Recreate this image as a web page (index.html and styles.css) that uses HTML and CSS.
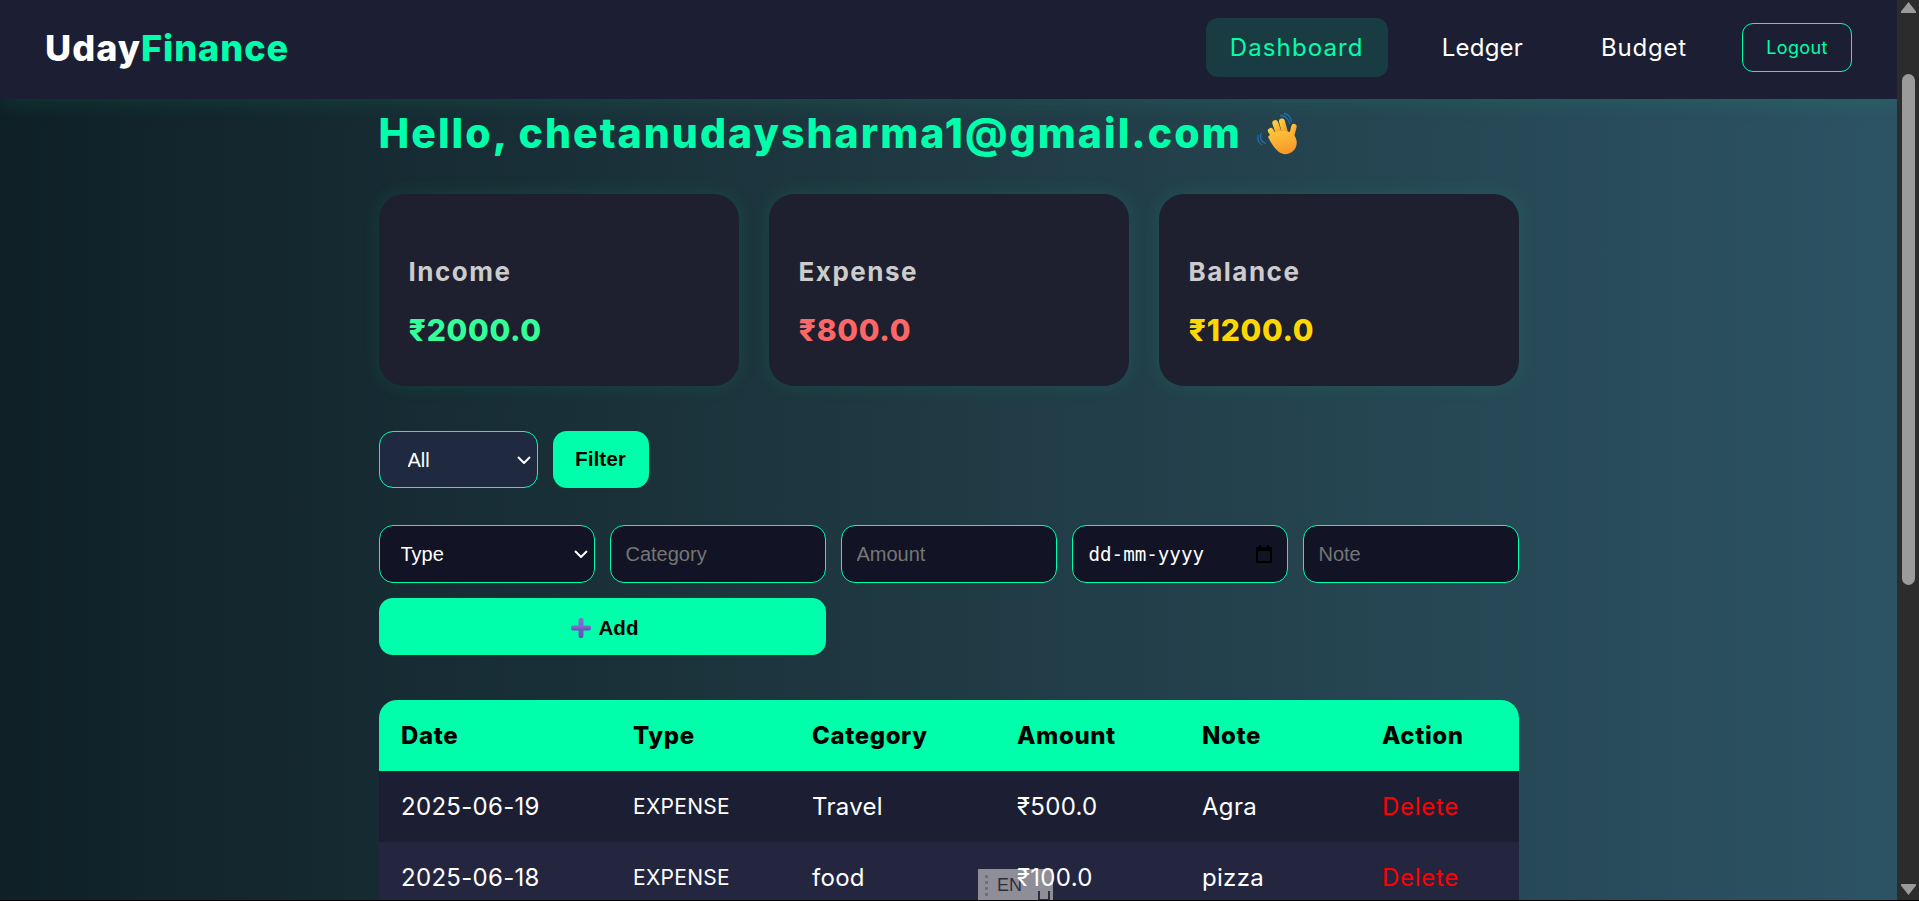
FILE: index.html
```html
<!DOCTYPE html>
<html lang="en">
<head>
    <meta charset="UTF-8">
    <meta name="viewport" content="width=device-width, initial-scale=1.0">
    <title>UdayFinance</title>
    <link rel="stylesheet" href="styles.css">
</head>
<body>
<div class="app">
    <div class="page">
        <nav class="navbar">
            <div class="logo">Uday<span>Finance</span></div>
            <div class="nav-links">
                <a class="nav-link active">Dashboard</a>
                <a class="nav-link ledger-link">Ledger</a>
                <a class="nav-link budget-link">Budget</a>
                <button class="logout-btn">Logout</button>
            </div>
        </nav>

        <main class="container">
            <h1 class="greeting">
                <span>Hello, chetanudaysharma1@gmail.com</span>
                <svg class="wave-icon" viewBox="48 62 126 128" aria-hidden="true">
                    <defs>
                        <linearGradient id="handFill" x1="0" y1="0" x2="0.4" y2="1">
                            <stop offset="0" stop-color="#ffc83d"/>
                            <stop offset="1" stop-color="#f79a2b"/>
                        </linearGradient>
                    </defs>
                    <g fill="none" stroke="#1c6fb5" stroke-width="4" stroke-linecap="round">
                        <path d="M122 72c12 0 24 10 27 24"/>
                        <path d="M133 66c11 2 20 12 21 24"/>
                        <path d="M64 126c-6 10-2 24 12 30"/>
                        <path d="M55 132c-4 10 0 22 10 27"/>
                    </g>
                    <g fill="none" stroke="url(#handFill)" stroke-linecap="round">
                        <path d="M112 150L92 118" stroke-width="17"/>
                        <path d="M122 140L106 95" stroke-width="18"/>
                        <path d="M138 135L126 90" stroke-width="18"/>
                        <path d="M152 145L162 105" stroke-width="16"/>
                    </g>
                    <path d="M84 136c10-10 30-20 50-18c18 2 34 14 36 32c2 20-14 38-36 38c-20 0-38-26-50-52z" fill="url(#handFill)"/>
                </svg>
            </h1>

            <section class="cards">
                <div class="card">
                    <h3>Income</h3>
                    <p class="amount income">₹2000.0</p>
                </div>
                <div class="card">
                    <h3>Expense</h3>
                    <p class="amount expense">₹800.0</p>
                </div>
                <div class="card">
                    <h3>Balance</h3>
                    <p class="amount balance">₹1200.0</p>
                </div>
            </section>

            <form class="filter-form">
                <div class="select-wrap filter-select">
                    <select><option>All</option></select>
                    <svg class="chevron" viewBox="0 0 14 8"><path d="M1 1l6 6 6-6"/></svg>
                </div>
                <button type="button" class="filter-btn">Filter</button>
            </form>

            <form class="add-form">
                <div class="select-wrap type-select">
                    <select><option>Type</option></select>
                    <svg class="chevron" viewBox="0 0 14 8"><path d="M1 1l6 6 6-6"/></svg>
                </div>
                <input type="text" placeholder="Category">
                <input type="text" placeholder="Amount">
                <div class="date-field">
                    <span>dd-mm-yyyy</span>
                    <svg class="calendar-icon" viewBox="0 0 16 18">
                        <path d="M3 0h2v2h6V0h2v2h3v16H0V2h3zM2 6v10h12V6z"/>
                    </svg>
                </div>
                <input type="text" placeholder="Note">
                <button type="button" class="add-btn">
                    <svg class="plus-icon" viewBox="0 0 20 20">
                        <defs>
                            <linearGradient id="plusFill" x1="0" y1="0" x2="0" y2="1">
                                <stop offset="0" stop-color="#8b6fd6"/>
                                <stop offset="1" stop-color="#5e52b8"/>
                            </linearGradient>
                        </defs>
                        <rect x="7.500" y="0" width="5" height="20" rx="2" fill="url(#plusFill)"/>
                        <rect x="0" y="7.500" width="20" height="5" rx="2" fill="url(#plusFill)"/>
                    </svg>
                    Add
                </button>
            </form>

            <table class="ledger">
                <colgroup>
                    <col class="col-date"><col class="col-type"><col class="col-category">
                    <col class="col-amount"><col class="col-note"><col class="col-action">
                </colgroup>
                <thead>
                    <tr>
                        <th>Date</th>
                        <th>Type</th>
                        <th>Category</th>
                        <th>Amount</th>
                        <th>Note</th>
                        <th>Action</th>
                    </tr>
                </thead>
                <tbody>
                    <tr>
                        <td>2025-06-19</td>
                        <td class="type-cell">EXPENSE</td>
                        <td>Travel</td>
                        <td><span class="money">₹500.0</span></td>
                        <td>Agra</td>
                        <td class="delete">Delete</td>
                    </tr>
                    <tr>
                        <td>2025-06-18</td>
                        <td class="type-cell">EXPENSE</td>
                        <td>food</td>
                        <td><span class="money">₹100.0</span></td>
                        <td>pizza</td>
                        <td class="delete">Delete</td>
                    </tr>
                </tbody>
            </table>
        </main>

        <div class="lang-bar">
            <i class="grip"></i>
            <span>EN</span>
            <i class="lang-key"></i>
        </div>
    </div>

    <div class="scrollbar">
        <svg class="arrow" viewBox="0 0 15 11"><path d="M7.500 0L15 9.500q.3 1.500-1 1.500H1q-1.300 0-1-1.500z"/></svg>
        <div class="thumb"></div>
        <svg class="arrow arrow-down" viewBox="0 0 15 11"><path d="M7.500 11L15 1.500q.3-1.500-1-1.500H1Q-.3 0 0 1.500z"/></svg>
    </div>
</div>
</body>
</html>
```

FILE: styles.css
```css
* {
    box-sizing: border-box;
}

html, body {
    margin: 0;
    height: 100%;
    overflow: hidden;
}

body {
    font-family: Inter, "Liberation Sans", sans-serif;
    color: #fff;
    background: #000;
}

.app {
    display: flex;
    height: 901px;
    border-bottom: 1px solid #000;
}

.page {
    position: relative;
    flex: 1;
    min-width: 0;
    overflow: hidden;
    background: linear-gradient(to right, #0f2027, #203a43, #2c5364);
}

/* navbar */
.navbar {
    position: relative;
    display: flex;
    align-items: center;
    justify-content: space-between;
    height: 99px;
    padding: 0 45px 4px 45px;
    background-color: #1c1f33;
    box-shadow: 0 4px 20px rgba(0, 255, 170, 0.1);
}

.logo {
    font-size: 36px;
    font-weight: 800;
    letter-spacing: 1px;
}

.logo span {
    color: #00ffaa;
}

.nav-links {
    display: flex;
    align-items: center;
    gap: 30px;
}

.nav-link {
    padding: 15px 24px;
    border-radius: 12px;
    font-size: 24px;
    line-height: 29px;
    color: #fff;
}

.nav-link.active {
    width: 182px;
    color: #00ffaa;
    letter-spacing: 1.1px;
    background-color: rgba(0, 255, 170, 0.13);
}

.ledger-link {
    letter-spacing: 0.2px;
}

.budget-link {
    letter-spacing: 0.8px;
}

.logout-btn {
    width: 110px;
    height: 49px;
    margin-left: 1px;
    background: transparent;
    border: 1px solid #00ffaa;
    border-radius: 11px;
    color: #00ffaa;
    font-family: Inter, sans-serif;
    font-size: 18px;
    letter-spacing: 0.4px;
}

/* content */
.container {
    width: 1140px;
    margin: 0 auto;
    padding-top: 4px;
}

.greeting {
    display: flex;
    align-items: center;
    gap: 14px;
    height: 60px;
    margin: 0 0 31px;
    font-size: 41px;
    font-weight: 800;
    letter-spacing: 2.05px;
    color: #00ffaa;
}

.wave-icon {
    width: 42px;
    height: 43px;
}

.cards {
    display: grid;
    grid-template-columns: repeat(3, 1fr);
    gap: 30px;
    margin-bottom: 45px;
}

.card {
    height: 192px;
    padding: 60px 30px 35px;
    background-color: #1e2030;
    border-radius: 25px;
    box-shadow: 0 0 20px rgba(0, 255, 170, 0.1);
}

.card h3 {
    margin: 0 0 19px;
    font-size: 26px;
    line-height: 36px;
    font-weight: 700;
    letter-spacing: 1.5px;
    color: #ccc;
}

.amount {
    margin: 0;
    font-size: 30px;
    line-height: 42px;
    font-weight: 800;
    letter-spacing: 0.7px;
}

.income { color: #33ff99; }
.expense { color: #ff6666; }
.balance { color: #ffd700; }

/* forms */
.filter-form {
    display: flex;
    gap: 15px;
    height: 57px;
    margin-bottom: 37px;
}

.select-wrap {
    position: relative;
}

.select-wrap select {
    width: 100%;
    height: 100%;
    appearance: none;
    background: transparent;
    border: 1px solid #00ffaa;
    border-radius: 14px;
    color: #fff;
    font-family: "Liberation Sans", Arial, sans-serif;
    font-size: 20px;
    outline: none;
}

.chevron {
    position: absolute;
    top: 50%;
    right: 7px;
    width: 14px;
    height: 8px;
    margin-top: -4px;
    fill: none;
    stroke: #fff;
    stroke-width: 2;
}

.filter-select {
    width: 159px;
    background-color: #1f2a40;
    border-radius: 14px;
}

.filter-select select {
    padding-left: 28px;
}

.filter-btn {
    width: 96px;
    padding: 0 0 2px;
    background-color: #00ffaa;
    border: none;
    border-radius: 14px;
    color: #000;
    font-family: "Liberation Sans", Arial, sans-serif;
    font-size: 20.8px;
    font-weight: 700;
}

.add-form {
    display: grid;
    grid-template-columns: repeat(5, 1fr);
    grid-auto-rows: 58px;
    gap: 15px;
    margin-bottom: 44px;
}

.type-select {
    background-color: #121426;
    border-radius: 14px;
}

.type-select select {
    padding-left: 21px;
    font-size: 20px;
}

.add-form input,
.date-field {
    width: 100%;
    height: 58px;
    padding: 0 15px;
    background-color: #121426;
    border: 1px solid #00ffaa;
    border-radius: 14px;
    color: #fff;
    font-family: "Liberation Sans", Arial, sans-serif;
    font-size: 20px;
    outline: none;
}

.add-form input::placeholder {
    color: #757575;
}

.date-field {
    display: flex;
    align-items: center;
    justify-content: space-between;
    padding-left: 16px;
    font-family: "DejaVu Sans Mono", monospace;
    font-size: 19.2px;
}

.calendar-icon {
    width: 16px;
    height: 18px;
    fill: #000;
}

.add-btn {
    grid-column: span 2;
    display: flex;
    align-items: center;
    justify-content: center;
    gap: 8px;
    height: 57px;
    padding: 2px 0 0 5px;
    background-color: #00ffaa;
    border: none;
    border-radius: 14px;
    color: #000;
    font-family: "Liberation Sans", Arial, sans-serif;
    font-size: 20.5px;
    font-weight: 700;
}

.plus-icon {
    width: 20px;
    height: 20px;
}

/* table */
.ledger {
    width: 100%;
    table-layout: fixed;
    border-collapse: collapse;
    border-radius: 18px 18px 0 0;
    overflow: hidden;
}

.col-date { width: 232px; }
.col-type { width: 179px; }
.col-category { width: 205px; }
.col-amount { width: 185px; }
.col-note { width: 180px; }
.col-action { width: 159px; }

.ledger th,
.ledger td {
    height: 71px;
    padding: 0 22px 0 22.5px;
    text-align: left;
    font-size: 24px;
    letter-spacing: 0.3px;
}

.ledger th {
    background-color: #00ffaa;
    color: #000;
    font-weight: 800;
    letter-spacing: 0.6px;
}

.ledger tbody tr:nth-child(odd) {
    background-color: #1c1f33;
}

.ledger tbody tr:nth-child(even) {
    background-color: #242640;
}

.ledger .type-cell {
    font-size: 21px;
}

.ledger .delete {
    color: #f00;
    letter-spacing: 0.7px;
}

.money {
    position: relative;
    z-index: 2;
}

/* language bar sits over the page */
.lang-bar {
    position: absolute;
    left: 978px;
    bottom: 0;
    z-index: 1;
    display: flex;
    align-items: flex-start;
    width: 75px;
    height: 31px;
    padding: 6px 0 0 7px;
    background-color: #8e8e98;
    color: #2e2e3a;
    font-size: 18px;
    font-family: "Liberation Sans", Arial, sans-serif;
}

.grip {
    width: 3px;
    height: 24px;
    margin-right: 9px;
    background: repeating-linear-gradient(to bottom, #6f6f7a 0 3px, transparent 3px 6px);
}

.lang-key {
    width: 12px;
    height: 10px;
    margin: 16px 0 0 16px;
    border: 2px solid #2e2e3a;
    border-top: none;
}

/* page scrollbar */
.scrollbar {
    display: flex;
    flex-direction: column;
    align-items: center;
    width: 22px;
    padding: 2px 0 5px;
    background-color: #2c2c2c;
}

.arrow {
    flex: none;
    width: 15px;
    height: 11px;
    fill: #9b9b9b;
}

.thumb {
    flex: none;
    width: 13px;
    height: 511px;
    margin-top: 61px;
    border-radius: 7px;
    background-color: #9b9b9b;
}

.arrow-down {
    margin-top: auto;
}
```
